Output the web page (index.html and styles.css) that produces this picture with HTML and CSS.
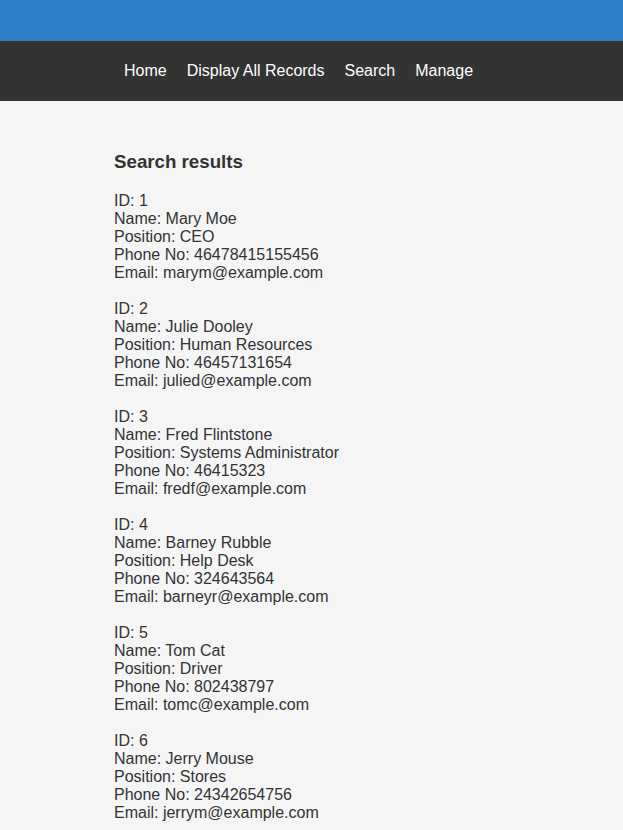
FILE: index.html
```html
<!DOCTYPE html>
<html>
<head>
<meta charset="utf-8">
<link rel="stylesheet" href="styles.css">
</head>
<body>
<header class="topbar"></header>
<nav class="nav">
  <ul class="nav-list">
    <li><a href="#">Home</a></li>
    <li><a href="#">Display All Records</a></li>
    <li><a href="#">Search</a></li>
    <li><a href="#">Manage</a></li>
  </ul>
</nav>
<main class="main">
  <h3 class="title">Search results</h3>
  <p class="record">ID: 1<br>Name: Mary Moe<br>Position: CEO<br>Phone No: 46478415155456<br>Email: marym@example.com</p>
  <p class="record">ID: 2<br>Name: Julie Dooley<br>Position: Human Resources<br>Phone No: 46457131654<br>Email: julied@example.com</p>
  <p class="record">ID: 3<br>Name: Fred Flintstone<br>Position: Systems Administrator<br>Phone No: 46415323<br>Email: fredf@example.com</p>
  <p class="record">ID: 4<br>Name: Barney Rubble<br>Position: Help Desk<br>Phone No: 324643564<br>Email: barneyr@example.com</p>
  <p class="record">ID: 5<br>Name: Tom Cat<br>Position: Driver<br>Phone No: 802438797<br>Email: tomc@example.com</p>
  <p class="record">ID: 6<br>Name: Jerry Mouse<br>Position: Stores<br>Phone No: 24342654756<br>Email: jerrym@example.com</p>
</main>
</body>
</html>
```
FILE: styles.css
```css
html, body {
  margin: 0;
  padding: 0;
}
body {
  font-family: "Liberation Sans", Arial, sans-serif;
  font-size: 16px;
  color: #333333;
  background: #f5f5f5;
}
.topbar {
  height: 41px;
  background: #2c7fc7;
}
.nav {
  height: 60px;
  background: #333333;
  padding-left: 114px;
}
.nav-list {
  list-style: none;
  margin: 0;
  padding: 0;
  display: flex;
  height: 60px;
  align-items: center;
}
.nav-list a {
  display: block;
  color: #ffffff;
  text-decoration: none;
  padding: 0 10px;
  line-height: 20px;
}
.main {
  padding: 31px 114px 0;
}
.title {
  font-size: 18.72px;
  font-weight: bold;
  margin: 18.72px 0 19px;
}
.record {
  margin: 18px 0;
  line-height: 18px;
}
```
